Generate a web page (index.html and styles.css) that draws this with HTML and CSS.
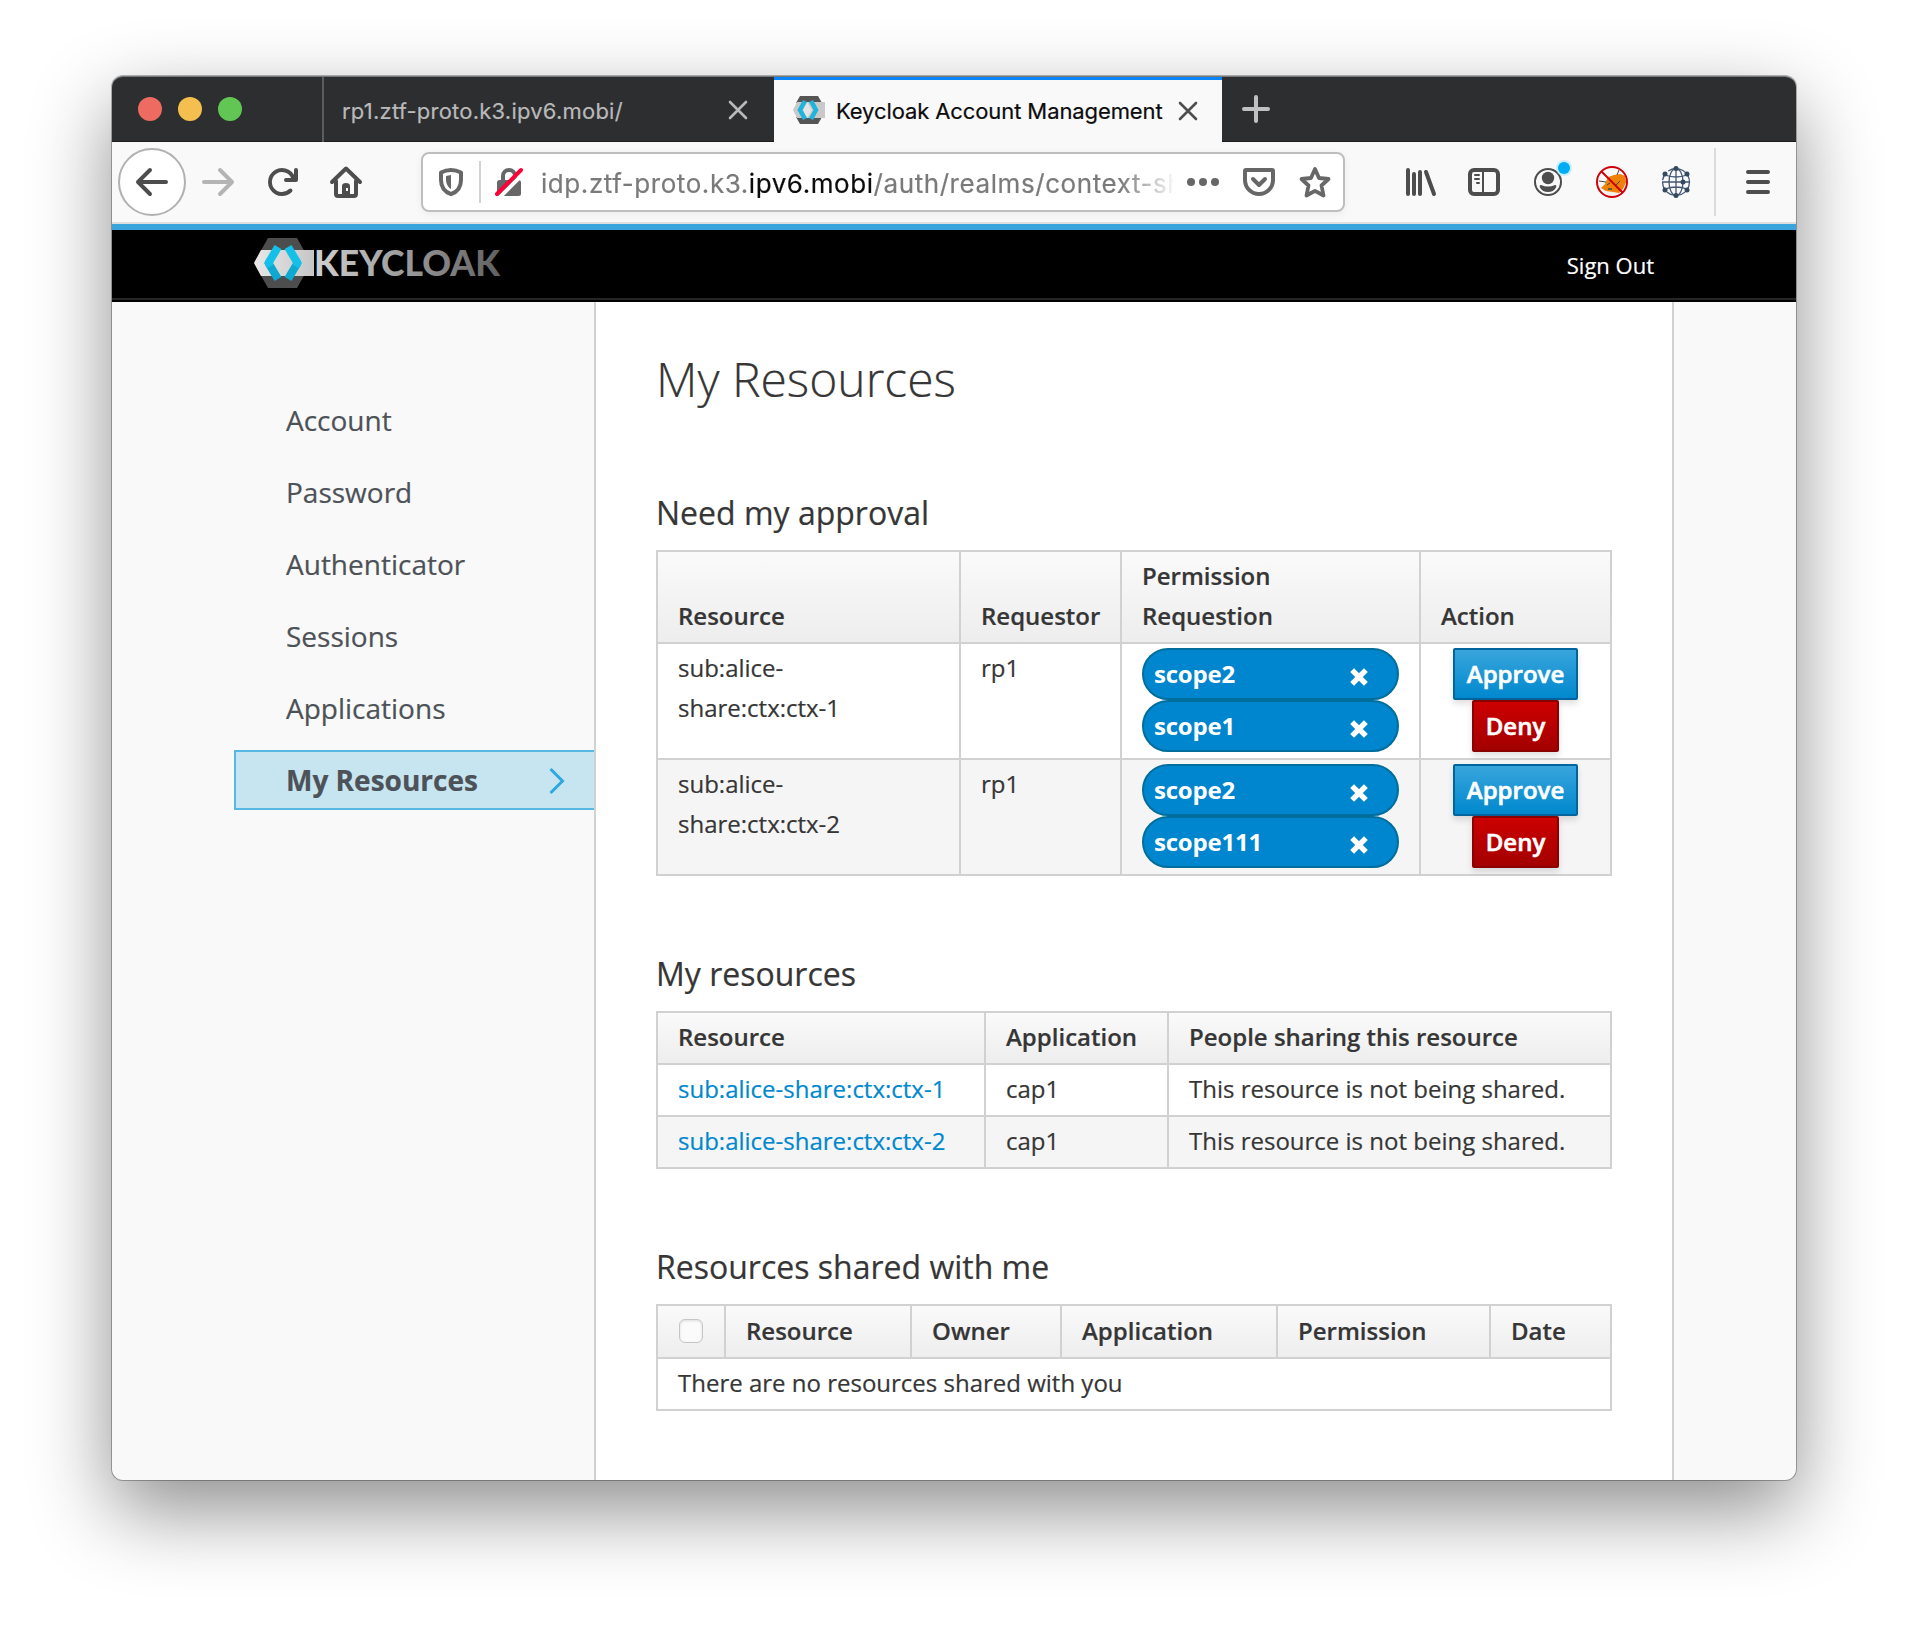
FILE: index.html
```html
<!DOCTYPE html>
<html lang="en">
<head>
<meta charset="utf-8">
<title>Keycloak Account Management</title>
<link rel="stylesheet" href="styles.css">
</head>
<body>
<div class="window">
  <div class="tabbar">
    <div class="lights"><i class="light red"></i><i class="light yellow"></i><i class="light green"></i></div>
    <div class="tab">
      <span class="tab-title tab-title-idle">rp1.ztf-proto.k3.ipv6.mobi/</span>
      <svg class="tab-close" viewBox="0 0 20 20"><path d="M2 2L18 18M18 2L2 18"/></svg>
    </div>
    <div class="tab active">
      <svg class="favicon" viewBox="0 0 32 28"><path fill="#555" d="M7 0h18l4 7H3zM3 21h26l-4 7H7z"/><path fill="#c9c9c9" d="M4 6h28v16H4L0 14z"/><path fill="#e4e4e4" d="M14 6l5 8-5 8-4-8z"/><path fill="none" stroke="#1bb5dd" stroke-width="4.5" d="M12 5L7 14l5 9M18 5l5 9-5 9"/></svg>
      <span class="tab-title">Keycloak Account Management</span>
      <svg class="tab-close" viewBox="0 0 20 20"><path d="M2 2L18 18M18 2L2 18"/></svg>
    </div>
    <svg class="new-tab" viewBox="0 0 28 28"><path d="M14 2v24M2 14h24"/></svg>
  </div>

  <div class="toolbar">
    <div class="back"><svg class="icon" viewBox="0 0 16 16"><path d="M15 7H3.414l4.293-4.293a1 1 0 0 0-1.414-1.414l-6 6a1 1 0 0 0 0 1.414l6 6a1 1 0 0 0 1.414-1.414L3.414 9H15a1 1 0 0 0 0-2z"/></svg></div>
    <svg class="icon forward" viewBox="0 0 16 16"><path transform="matrix(-1 0 0 1 16 0)" d="M15 7H3.414l4.293-4.293a1 1 0 0 0-1.414-1.414l-6 6a1 1 0 0 0 0 1.414l6 6a1 1 0 0 0 1.414-1.414L3.414 9H15a1 1 0 0 0 0-2z"/></svg>
    <svg class="icon" viewBox="0 0 16 16"><path d="M15 1a1 1 0 0 0-1 1v2.418A6.995 6.995 0 1 0 8 15a6.954 6.954 0 0 0 4.95-2.05 1 1 0 0 0-1.414-1.414A5.019 5.019 0 1 1 12.549 6H10a1 1 0 0 0 0 2h5a1 1 0 0 0 1-1V2a1 1 0 0 0-1-1z"/></svg>
    <svg class="icon" viewBox="0 0 32 32"><g fill="none" stroke="#4d4d4e" stroke-linecap="round" stroke-linejoin="round"><path stroke-width="4" d="M2 16L16 2.500 30 16"/><path stroke-width="4" d="M6 15v13q0 2 2 2h16q2 0 2-2V15"/></g><path d="M12 30V20q0-3 4-3t4 3v10z"/><rect x="16" y="22" width="2" height="3" fill="#f9f9fa"/></svg>
    <div class="urlbar">
      <svg class="icon shield" viewBox="0 0 32 32"><path fill="none" stroke="#676767" stroke-width="4" stroke-linejoin="round" d="M6 6.500Q16 1.500 26 6.500V14C26 21 22 26 16 28.200 10 26 6 21 6 14z"/><path fill="#676767" d="M16 9v14c-3.500-2-5-6-5-10v-3z"/></svg>
      <i class="url-sep"></i>
      <svg class="icon lock" viewBox="0 0 32 32"><path fill="none" stroke="#676767" stroke-width="4" d="M10 16V10a6 6 0 0 1 12 0v6"/><rect x="4" y="14" width="24" height="16" rx="2.500" fill="#676767"/><path stroke="#fff" stroke-width="4" d="M7 31L32 6"/><path stroke="#ff0039" stroke-width="4" stroke-linecap="round" d="M4 28L28 4"/></svg>
      <span class="url">idp.ztf-proto.k3.<b>ipv6.mobi</b>/auth/realms/context-sh</span>
      <svg class="icon" viewBox="0 0 32 32"><g fill="#676767"><circle cx="4" cy="16" r="4"/><circle cx="16" cy="16" r="4"/><circle cx="28" cy="16" r="4"/></g></svg>
      <svg class="icon pocket" viewBox="0 0 32 32"><g fill="none" stroke="#676767" stroke-width="4" stroke-linejoin="round" stroke-linecap="round"><path d="M2 5q0-1 1-1h26q1 0 1 1v9a14 14 0 0 1-28 0z"/><path d="M10 13l6 6 6-6"/></g></svg>
      <svg class="icon star" viewBox="0 0 32 32"><path fill="none" stroke="#676767" stroke-width="3.800" stroke-linejoin="round" d="M16 3l4 9 9.500 1-7 6.500 2 10L16 24.800 7.500 29.500l2-10-7-6.500 9.500-1z"/></svg>
    </div>
    <div class="tools">
      <svg class="icon" viewBox="0 0 32 32"><path fill="none" stroke="#4d4d4e" stroke-width="4" stroke-linecap="round" d="M4 4v24M10 8v20M16 6v22M22 6l8 22"/></svg>
      <svg class="icon" viewBox="0 0 32 32"><g fill="none" stroke="#4d4d4e"><rect x="2" y="4" width="28" height="24" rx="4" stroke-width="4"/><path stroke-width="2" d="M15 4v24"/><path stroke-width="2" stroke-linecap="round" d="M7 9h4M7 13h4M9 17h2"/></g></svg>
      <svg class="icon account" viewBox="0 0 32 32"><circle cx="16" cy="16" r="13" fill="none" stroke="#4d4d4e" stroke-width="2"/><circle cx="16" cy="12" r="6.200"/><path d="M9 19q-2 0-1 2.500 2.500 4.500 8 4.500t8-4.500q1-2.500-1-2.500-7 3-14 0z"/><circle cx="32" cy="2" r="8" fill="#b8ecff" fill-opacity=".8"/><circle cx="32" cy="2" r="6" fill="#00adf5"/></svg>
      <svg class="icon" viewBox="0 0 32 32"><path fill="#f3f0e8" d="M7 23l8 2 11-2-3 5-8 2-6-3z"/><path fill="#ee8208" d="M5 22l4-4 3-7 6-2 6-1 5 2 1 6-3 7-4 4-6-1-7-1z"/><path stroke="#444" fill="none" d="M3 15l7 1M21 9l2-5M24 15l-4 4M11 19l3-2"/><path stroke="#444" stroke-width="1.500" d="M12 23h4"/><g fill="none" stroke="#d0000a" stroke-width="2"><circle cx="16" cy="16" r="15"/><path d="M5.500 5.500l21 21"/></g></svg>
      <svg class="icon" viewBox="0 0 32 32"><g fill="none" stroke="#425873" stroke-width="1.300"><circle cx="16" cy="16" r="13.500" stroke-dasharray="9 2"/><ellipse cx="16" cy="16" rx="7" ry="13.500"/><path d="M16 2v28M2 16h28M5 9q11 4 22 0M5 23q11-4 22 0"/></g><g fill="#34495e"><circle cx="16" cy="2.500" r="2.500"/><circle cx="5" cy="8" r="2.500"/><circle cx="27" cy="8" r="2.500"/><circle cx="23" cy="16" r="2.500"/><circle cx="5" cy="24" r="2.500"/><circle cx="27" cy="24" r="2.500"/><circle cx="16" cy="29.500" r="2.500"/></g></svg>
    </div>
    <i class="menu-sep"></i>
    <svg class="icon" viewBox="0 0 32 32"><path stroke="#4d4d4e" stroke-width="4" stroke-linecap="round" d="M6 6h20M6 16h20M6 26h20"/></svg>
  </div>

  <header class="site-header">
    <svg class="logo" viewBox="0 0 248 50">
      <defs><linearGradient id="word" x1="0" x2="1"><stop offset="0" stop-color="#d0d0d0"/><stop offset=".5" stop-color="#999"/><stop offset="1" stop-color="#606060"/></linearGradient>
      <linearGradient id="band" x1="0" x2="1"><stop offset="0" stop-color="#e8e8e8"/><stop offset="1" stop-color="#c6c6c6"/></linearGradient></defs>
      <path fill="#4d4d4d" d="M14 0h29l14 25-14 25H14L0 25z"/>
      <path fill="url(#band)" d="M7 12h53v26H7L0 25z"/>
      <g fill="none" stroke-width="8" stroke-linejoin="miter"><path stroke="#14bfe8" d="M24 9l-9.500 16"/><path stroke="#0fa8d0" d="M14.500 25L24 41"/><path stroke="#14bfe8" d="M34 9l9.500 16"/><path stroke="#0fa8d0" d="M43.500 25L34 41"/></g>
      <path fill="#14bfe8" d="M10 25l3-5 6 3v4l-6 3zM48 25l-3-5-6 3v4l6 3z"/>
      <text class="logo-word" x="60" y="38" textLength="186" lengthAdjust="spacingAndGlyphs" fill="url(#word)">KEYCLOAK</text>
    </svg>
    <a class="signout">Sign Out</a>
  </header>

  <div class="page">
    <nav class="sidebar">
      <a>Account</a><a>Password</a><a>Authenticator</a><a>Sessions</a><a>Applications</a>
      <a class="selected">My Resources<svg class="chevron" viewBox="0 0 16 28"><path d="M1.500 2L13.500 14 1.500 26"/></svg></a>
    </nav>
    <main class="content">
      <h1>My Resources</h1>
      <h2 class="first">Need my approval</h2>
      <table>
        <colgroup><col class="a1"><col class="a2"><col class="a3"><col class="a4"></colgroup>
        <thead><tr><th>Resource</th><th>Requestor</th><th>Permission<br>Requestion</th><th>Action</th></tr></thead>
        <tbody>
          <tr><td>sub:alice-<br>share:ctx:ctx-1</td><td>rp1</td>
            <td><div class="chip">scope2<svg class="x" viewBox="0 0 16 16"><path d="M2.500 2.500l11 11M13.500 2.500l-11 11"/></svg></div><div class="chip">scope1<svg class="x" viewBox="0 0 16 16"><path d="M2.500 2.500l11 11M13.500 2.500l-11 11"/></svg></div></td>
            <td class="actions"><div class="btns"><a class="btn approve">Approve</a><a class="btn deny">Deny</a></div></td></tr>
          <tr><td>sub:alice-<br>share:ctx:ctx-2</td><td>rp1</td>
            <td><div class="chip">scope2<svg class="x" viewBox="0 0 16 16"><path d="M2.500 2.500l11 11M13.500 2.500l-11 11"/></svg></div><div class="chip">scope111<svg class="x" viewBox="0 0 16 16"><path d="M2.500 2.500l11 11M13.500 2.500l-11 11"/></svg></div></td>
            <td class="actions"><div class="btns"><a class="btn approve">Approve</a><a class="btn deny">Deny</a></div></td></tr>
        </tbody>
      </table>
      <h2>My resources</h2>
      <table>
        <colgroup><col class="b1"><col class="b2"><col class="b3"></colgroup>
        <thead><tr><th>Resource</th><th>Application</th><th>People sharing this resource</th></tr></thead>
        <tbody>
          <tr><td><a class="link">sub:alice-share:ctx:ctx-1</a></td><td>cap1</td><td>This resource is not being shared.</td></tr>
          <tr><td><a class="link">sub:alice-share:ctx:ctx-2</a></td><td>cap1</td><td>This resource is not being shared.</td></tr>
        </tbody>
      </table>
      <h2>Resources shared with me</h2>
      <table class="shared">
        <colgroup><col class="c1"><col class="c2"><col class="c3"><col class="c4"><col class="c5"><col class="c6"></colgroup>
        <thead><tr><th><span class="checkbox"></span></th><th>Resource</th><th>Owner</th><th>Application</th><th>Permission</th><th>Date</th></tr></thead>
        <tbody><tr><td colspan="6">There are no resources shared with you</td></tr></tbody>
      </table>
    </main>
  </div>
</div>
</body>
</html>
```
FILE: styles.css
```css
* { box-sizing: border-box; }
body { margin: 0; padding: 76px 112px 148px; background: #fff; height: 1628px; overflow: hidden; font-family: "Open Sans", sans-serif; font-size: 24px; color: #363636; -webkit-text-stroke: .2px; }
svg { display: block; flex: none; overflow: visible; }
.window { width: 1684px; height: 1404px; border-radius: 11px; display: flex; flex-direction: column; box-shadow: 0 0 0 1px rgba(0,0,0,.28), 0 30px 80px rgba(0,0,0,.45); background: #f9f9f9; }

.tabbar { height: 66px; flex: none; display: flex; align-items: center; background: #2d2e30; border-radius: 11px 11px 0 0; border-top: 1px solid #77787a; border-bottom: 1px solid #1c1c1d; font-family: Inter, sans-serif; }
.lights { width: 210px; padding-left: 26px; display: flex; gap: 16px; }
.light { width: 24px; height: 24px; border-radius: 50%; }
.red { background: #ed6b60; }
.yellow { background: #f5bf4f; }
.green { background: #62c655; }
.tab { height: 65px; width: 452px; border-left: 2px solid #5b5c5e; padding: 2px 26px 0 18px; display: flex; align-items: center; color: #b9b9ba; font-size: 22px; white-space: nowrap; }
.tab-title { flex: 1; letter-spacing: -.1px; }
.tab-title-idle { letter-spacing: .22px; padding-top: 2px; }
.tab-close { width: 20px; height: 20px; fill: none; stroke: #b9b9ba; stroke-width: 2.6; stroke-linecap: round; }
.tab.active { width: 448px; height: 66px; margin-bottom: -1px; border-left: 0; border-top: 3px solid #0a84ff; background: #f9f9fa; color: #0c0c0d; padding: 0 24px 0 19px; }
.active .tab-title { padding-left: 11px; }
.active .tab-close { stroke: #4f4f50; }
.favicon { width: 32px; height: 28px; margin-top: -2px; }
.new-tab { width: 28px; height: 28px; margin-left: 20px; stroke: #c0c0c1; stroke-width: 4; stroke-linecap: round; }

.toolbar { height: 82px; flex: none; display: flex; align-items: center; background: #f9f9fa; border-bottom: 2px solid #dfdfe0; padding-left: 6px; }
.icon { width: 32px; height: 32px; fill: #4d4d4e; }
.back { width: 68px; height: 68px; flex: none; border: 2px solid #b1b1b1; border-radius: 50%; background: #fff; display: flex; align-items: center; justify-content: center; margin-right: 16px; }
.forward { fill: #b4b4b5; }
.toolbar > .icon { margin-right: 32px; }
.toolbar > .icon:last-child { margin-right: 0; }
.urlbar { width: 924px; height: 60px; flex: none; margin-left: 27px; border: 2px solid #bebebe; border-radius: 8px; background: #fff; box-shadow: 0 2px 8px rgba(0,0,0,.06); display: flex; align-items: center; padding-left: 12px; }
.url-sep { width: 2px; height: 42px; background: #d3d3d4; margin: 0 12px; }
.url { flex: none; margin-left: 16px; padding-top: 2px; width: 632px; font: 26px Inter, sans-serif; letter-spacing: .57px; color: #7a7a7b; white-space: nowrap; overflow: hidden; margin-right: 14px; -webkit-mask-image: linear-gradient(90deg, #000 580px, transparent 636px); mask-image: linear-gradient(90deg, #000 580px, transparent 636px); }
.url b { font-weight: 400; color: #0c0c0d; }
.pocket, .star { margin-left: 24px; }
.tools { display: flex; gap: 32px; margin-left: 59px; }
.menu-sep { flex: none; width: 2px; height: 68px; background: #dcdcdd; margin: 0 26px 0 22px; }

.site-header { height: 78px; flex: none; background: #000; border-top: 6px solid #39a5dc; display: flex; justify-content: space-between; padding: 8px 142px 0 142px; box-shadow: inset 0 -2px #000, inset 0 -4px #252525; }
.logo { width: 248px; height: 50px; }
.logo-word { font: 900 36px Lato, sans-serif; -webkit-text-stroke: 0; }
.signout { color: #fff; font-size: 22px; line-height: 54px; }

.page { flex: 1; display: flex; min-height: 0; }
.sidebar { width: 484px; border-right: 2px solid #d1d1d1; padding: 88px 0 0 122px; display: flex; flex-direction: column; gap: 12px; font-size: 28px; color: #4d5258; }
.sidebar a { height: 60px; line-height: 60px; padding-left: 52px; }
.sidebar a.selected { display: flex; align-items: center; justify-content: space-between; line-height: 56px; font-weight: 700; padding: 0 29px 0 50px; background: #c7e5f0; border: 2px solid #57b9e1; border-right: 0; }
.chevron { width: 16px; height: 28px; margin-top: 2px; fill: none; stroke: #2ea9df; stroke-width: 3; }
.content { width: 1078px; background: #fff; border-right: 2px solid #d1d1d1; padding: 47px 60px 0 60px; }
h1 { margin: 0; font-size: 48px; line-height: 60px; font-weight: 300; }
h2 { margin: 78px 0 17px; font-size: 32px; line-height: 40px; font-weight: 400; }
h2.first { margin-top: 84px; }

table { width: 956px; table-layout: fixed; border-collapse: separate; border-spacing: 0; border: solid #d1d1d1; border-width: 2px 0 0 2px; line-height: 40px; }
th, td { border: solid #d1d1d1; border-width: 0 2px 2px 0; padding: 4px 0 6px 20px; text-align: left; vertical-align: top; white-space: nowrap; }
th { vertical-align: bottom; font-weight: 600; }
thead tr { background: linear-gradient(#fafafa, #ededed); }
tbody tr:nth-child(even) { background: #f5f5f5; }
.a1 { width: 303px; } .a2 { width: 161px; } .a3 { width: 299px; } .a4 { width: 191px; }
.b1 { width: 328px; } .b2 { width: 183px; } .b3 { width: 443px; }
.c1 { width: 68px; } .c2 { width: 186px; } .c3 { width: 150px; } .c4 { width: 216px; } .c5 { width: 213px; } .c6 { width: 121px; }
.shared th { padding-top: 5px; }
.link { color: #0088ce; }
.chip { width: 257px; height: 52px; border: 2px solid #006e9c; border-radius: 26px; background: #0085cf; color: #fff; font-weight: 700; letter-spacing: -.2px; line-height: 48px; padding: 0 28px 0 10px; display: flex; justify-content: space-between; align-items: center; -webkit-text-stroke: 0; }
.x { width: 20px; height: 20px; margin-top: 5px; stroke: #fff; stroke-width: 4.4; }
.actions { padding-left: 0; }
.btns { display: flex; flex-direction: column; align-items: center; }
.btn { height: 52px; border: 2px solid #00659c; border-radius: 2px; line-height: 48px; font-weight: 600; color: #fff; text-align: center; box-shadow: 0 4px 6px rgba(3,3,3,.12); -webkit-text-stroke: .6px; }
.approve { width: 125px; background: linear-gradient(#39a5dc, #0088ce); }
.deny { width: 87px; border-color: #8b0000; background: linear-gradient(#cc0000, #a30000); }
.checkbox { display: block; width: 24px; height: 24px; margin: 8px 0 8px 1px; border: 1px solid #c6c6c6; border-radius: 6px; background: #fbfbfb; box-shadow: inset 0 1px 3px rgba(0,0,0,.12); }
```
